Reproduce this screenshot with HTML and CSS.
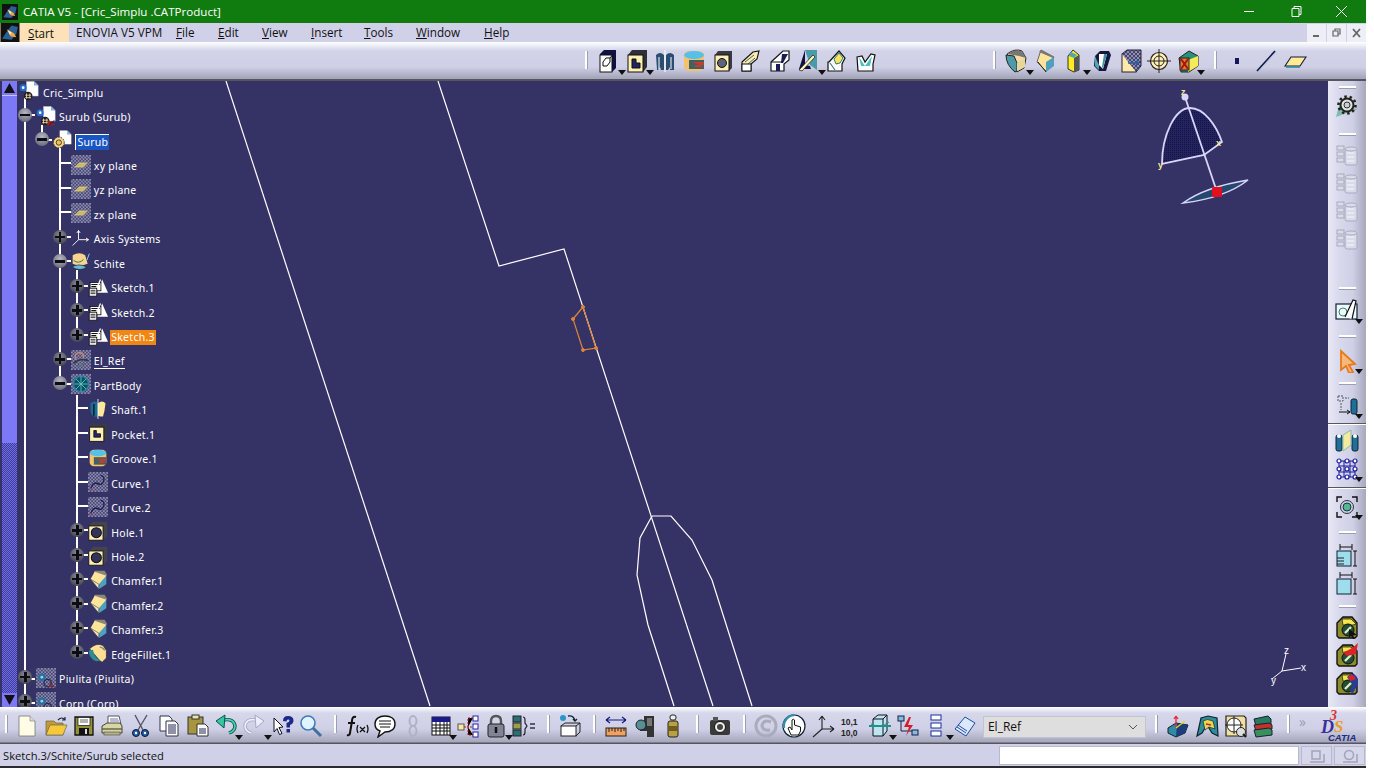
FILE: index.html
```html
<!DOCTYPE html>
<html lang="en">
<head>
<meta charset="utf-8">
<title>CATIA V5 - [Cric_Simplu .CATProduct]</title>
<link rel="stylesheet" href="styles.css">
</head>
<body>
<svg class="defs" aria-hidden="true">
<defs>
<pattern id="chk" width="4" height="4" patternUnits="userSpaceOnUse"><rect width="4" height="4" fill="#8d8db4"/><rect width="2" height="2" fill="#45456f"/><rect x="2" y="2" width="2" height="2" fill="#45456f"/></pattern>
<pattern id="dith" width="2" height="2" patternUnits="userSpaceOnUse"><rect width="2" height="2" fill="#26245c"/><rect width="1" height="1" fill="#12124a"/></pattern>
<symbol id="logo" viewBox="0 0 24 24"><rect width="24" height="24" fill="#111"/><path d="M2 20 9 9l5-6 8 2-2 9-6 7z" fill="#2b5f95"/><path d="M8 8l9 5 3 5-7-1z" fill="#f2a93c"/><path d="M9 9l5 3-2 3z" fill="#fff3c0"/></symbol>
<symbol id="product" viewBox="0 0 24 24"><path d="M9 .5h9l5 5V18H9z" fill="#fff" stroke="#bcd" stroke-width=".6"/><path d="M18 .5v5h5" fill="#7fb2e0"/><circle cx="5" cy="8" r="4.2" fill="#2470d0"/><circle cx="5" cy="8" r="1.6" fill="#fff"/><circle cx="11" cy="18" r="5.2" fill="#1a1a30"/><path d="M9 15v6M13 15v6M7.5 17h7M7.5 20h7" stroke="#f3d58a" stroke-width="1.1"/></symbol>
<symbol id="productr" viewBox="0 0 24 24"><use href="#product"/><path d="M15 17l8 6H13z" fill="#a32020"/><path d="M16 23l6-6" stroke="#300" stroke-width="1"/></symbol>
<symbol id="producth" viewBox="0 0 24 24"><rect width="24" height="24" fill="url(#chk)"/><circle cx="7" cy="11" r="4.500" fill="#2470a0"/><circle cx="7" cy="11" r="1.600" fill="#bcd"/><circle cx="14" cy="18" r="4.500" fill="none" stroke="#2a2a50" stroke-width="1.500"/><path d="M17 17l6 6h-8z" fill="#7a3040"/></symbol>
<symbol id="partdoc" viewBox="0 0 24 24"><path d="M8 .5h9l5 5V17H8z" fill="#fff"/><path d="M17 .5v5h5" fill="#7fb2e0"/><circle cx="7" cy="15" r="6.5" fill="#f6d78c" stroke="#3a3320" stroke-width="1.2" stroke-dasharray="2 1.2"/><circle cx="7" cy="15" r="3.2" fill="#e9c05a" stroke="#333"/></symbol>
<symbol id="plane" viewBox="0 0 24 24"><rect width="24" height="24" fill="url(#chk)"/><path d="M3 15l7-6h11l-6 6z" fill="#b9a868"/><path d="M5 14h10M7 12h10M9 10h9" stroke="#e3d58f" stroke-width=".8"/></symbol>
<symbol id="axis" viewBox="0 0 24 24"><path d="M9 14V3M9 3l-2 3M9 3l2 3M9 14h12M21 14l-3-2M21 14l-3 2M9 14l-7 7" fill="none" stroke="#fff" stroke-width="1.1"/></symbol>
<symbol id="sketches" viewBox="0 0 24 24"><path d="M2 4q8-5 15 0l3 10-10 3-8-3z" fill="#f6d48f"/><path d="M3 10q6 5 12-1" fill="none" stroke="#264" stroke-width="1"/><path d="M1 18q8-5 18 0q-8 6-18 0z" fill="#6fb7d8" stroke="#123" stroke-width=".8"/><path d="M19 10l3-8" stroke="#8cc6ff" stroke-width="1.2"/></symbol>
<symbol id="sketch" viewBox="0 0 24 24"><path d="M17 3 24 19H11z" fill="#fff"/><rect x="2.500" y="6.500" width="13" height="10" fill="#fff" stroke="#111"/><path d="M4 9h10M4 11.500h6" stroke="#111" stroke-width="1.400"/><path d="M15 3l-4 9" stroke="#fff" stroke-width="1.500"/><rect x="1.500" y="13.500" width="9" height="9.500" fill="#fff" stroke="#111"/><path d="M3 16h6M3 18h6M3 20h6" stroke="#111"/></symbol>
<symbol id="elref" viewBox="0 0 24 24"><rect width="24" height="24" fill="url(#chk)"/><circle cx="10" cy="8" r="5" fill="none" stroke="#cf8a72" stroke-width="1.5"/><path d="M3 16q8-7 18-3" fill="none" stroke="#2a3a50" stroke-width="2"/><path d="M6 20l10-3" stroke="#5a6a80" stroke-width="1.5"/></symbol>
<symbol id="body" viewBox="0 0 24 24"><rect width="24" height="24" fill="url(#chk)"/><circle cx="12" cy="12" r="9" fill="#124f66" stroke="#1a8d9f" stroke-width="1.4"/><path d="M4 12h16M12 3v18M6 6l12 12M18 6 6 18" stroke="#5ad0c4" stroke-width="1"/></symbol>
<symbol id="shaft" viewBox="0 0 24 24"><path d="M3 5q5-4 9 0v17l-4-1q-5-1-5-8z" fill="#1b6e95"/><path d="M12 5q5-4 9 0-1 10-3 16h-3l-3-1z" fill="#ffe79a"/><path d="M12 0v24" stroke="#fff" stroke-width="1"/><path d="M7 6v14" stroke="#123" stroke-width="2"/></symbol>
<symbol id="shaftt" viewBox="0 0 24 24"><path d="M3 6q4-4 8 0v15H8l-1-3-2 3H4z" fill="#2a4d72"/><path d="M13 6q4-4 8 0v15h-4v-3l-2 3h-2z" fill="#2a4d72"/><path d="M12 1v22M6 8v12M18 8v12" stroke="#fff" stroke-width="1"/></symbol>
<symbol id="pocket" viewBox="0 0 24 24"><path d="M2 5l4-4h17v17l-4 4z" fill="#3a3a45"/><rect x="2" y="5" width="17" height="17" fill="#ffefb5" stroke="#111"/><path d="M7 9v8h8v-4H10V9z" fill="#26266a" stroke="#111"/></symbol>
<symbol id="groove" viewBox="0 0 24 24"><rect x="2" y="2" width="20" height="20" rx="5" fill="#f4c26d"/><ellipse cx="12" cy="6" rx="10" ry="4" fill="#57c0e8"/><path d="M7 11h15v9H7z" fill="#41605f"/><path d="M10 13h12v3H13v2h9" fill="#c53c30"/></symbol>
<symbol id="curve" viewBox="0 0 24 24"><rect width="24" height="24" fill="url(#chk)"/><path d="M3 20q4-9 9-6t7-4q1-5-4-6" fill="none" stroke="#1c1c50" stroke-width="1.6"/><path d="M2 19l3 3" stroke="#a04060" stroke-width="1.5"/></symbol>
<symbol id="hole" viewBox="0 0 24 24"><path d="M1 6l5-5h17v17l-5 5z" fill="#44444e"/><rect x="1" y="6" width="17" height="17" fill="#ffefb5" stroke="#111"/><circle cx="10" cy="14" r="6" fill="#33335a" stroke="#111" stroke-width="1.3"/></symbol>
<symbol id="chamfer" viewBox="0 0 24 24"><path d="M8 1h12l3 5-7 6-9-6z" fill="#8b8678"/><path d="M8 2 22 7l-8 13-11-9z" fill="#ffe59a"/><path d="M22 7v10l-9 6v-6z" fill="#4f9fbe"/><path d="M3 11l10 12v-6z" fill="#efe6c8" stroke="#222" stroke-width=".6"/></symbol>
<symbol id="fillet" viewBox="0 0 24 24"><path d="M2 7q8-8 16-4l4 6v9l-5 5-3-2z" fill="#ffdf96" stroke="#223" stroke-width=".7"/><path d="M1 9q0 10 9 13l5-1q-8-4-9-13z" fill="#2f8d92"/><path d="M14 5q4 0 6 4" stroke="#8a8478" stroke-width="1.5" fill="none"/></symbol>
<symbol id="pad" viewBox="0 0 24 24"><path d="M8 1h12v18l-4 4H4V5z" fill="#111142"/><rect x="4" y="6" width="12" height="17" fill="#fff" stroke="#111"/><path d="M7 13l3-4h4v4l-3 4H7zM14 9l4-5" fill="#fff" stroke="#111"/></symbol>
<symbol id="pocket2" viewBox="0 0 24 24"><path d="M3 6l4-5h15v17l-4 5H3z" fill="#2f2f3a"/><rect x="3" y="6" width="15" height="17" fill="#ffefb5" stroke="#111"/><path d="M7 10v9h8v-5h-4v-4z" fill="#23235e" stroke="#111"/></symbol>
<symbol id="hole2" viewBox="0 0 24 24"><path d="M4 6l3-4h14v17l-3 3H4z" fill="#3a3a44"/><rect x="4" y="6" width="14" height="16" fill="#ffefb5" stroke="#111"/><circle cx="11" cy="14" r="4.5" fill="#5d6478" stroke="#111"/></symbol>
<symbol id="rib" viewBox="0 0 24 24"><path d="M3 13 14 3l6-1-2 8-6 5v7H3z" fill="#ffe9b0" stroke="#111" stroke-width="1.1"/><path d="M6 13l9-7M9 15l7-6" stroke="#3a6a6a"/><rect x="3" y="15" width="9" height="7" fill="#fff" stroke="#111"/></symbol>
<symbol id="slot" viewBox="0 0 24 24"><path d="M3 13 15 2h6v9l-5 4v7H3z" fill="#fff" stroke="#111" stroke-width="1.2"/><path d="M14 5h6l-5 9h-2z" fill="#1c1c5a"/><rect x="8" y="15" width="4" height="7" fill="#1c1c5a"/><path d="M3 13h12" stroke="#111"/></symbol>
<symbol id="stiff" viewBox="0 0 24 24"><path d="M9 1h12v20l-7-5z" fill="#4b9aa8"/><path d="M9 1v15l5 1 1 3-12 0z" fill="#11113f"/><path d="M3 21 17 6l2 2L6 22z" fill="#fff5c0" stroke="#111" stroke-width=".7"/></symbol>
<symbol id="combine" viewBox="0 0 24 24"><path d="M4 13 14 2l6 7-3 6v7H3v-9z" fill="#fff" stroke="#111" stroke-width="1.2"/><path d="M9 10l5-6 4 5-3 5-4 1z" fill="#ffe35f" stroke="#2a7a7a"/><path d="M5 14l5 7" stroke="#3a7a8a" stroke-width="1.2"/></symbol>
<symbol id="loft" viewBox="0 0 24 24"><path d="M3 8l5-1 3 6 6-8 4 1-2 9v7H4z" fill="#fff" stroke="#111" stroke-width="1.2"/><path d="M5 8l6 9 7-10-2 10H7z" fill="#4fc0c0"/></symbol>
<symbol id="dfillet" viewBox="0 0 24 24"><path d="M3 5q8-6 15-3l4 7-2 10-7 4z" fill="#f5dca6" stroke="#222"/><path d="M2 6q0 10 9 17l2-1v-8l-3-7z" fill="#4e9aa8" stroke="#222"/><path d="M13 14l8-5v9l-8 4z" fill="#e8d59a"/><path d="M3 5l6-3 9 0 4 7-7-2z" fill="#777"/></symbol>
<symbol id="dchamfer" viewBox="0 0 24 24"><path d="M8 1l13 7-8 14-9-9z" fill="#ffe39a" stroke="#666"/><path d="M21 8v9l-8 6V13z" fill="#4f9fbe"/><path d="M5 13l8 10" stroke="#222"/><path d="M8 1l13 7-1 1-14-6z" fill="#777"/></symbol>
<symbol id="draft" viewBox="0 0 24 24"><path d="M7 7l5-6 6 5v15l-5 2-6-3z" fill="#ffec1f" stroke="#333"/><path d="M18 6v15l-5 2V9z" fill="#555"/><path d="M10 3l6 3-3 3-5-2z" fill="#4ea5b4"/></symbol>
<symbol id="shell" viewBox="0 0 24 24"><path d="M5 7l5-5h9l2 4-5 16H9l-5-5z" fill="#16163e"/><path d="M9 5h8l-4 15-4-4z" fill="#fff"/><path d="M5 7l4 9 0 5-4-4z" fill="#4ea5b4"/><path d="M14 5l3 0-4 14-1-1z" fill="#3d91a5"/></symbol>
<symbol id="thick" viewBox="0 0 24 24"><rect x="3" y="5" width="14" height="18" fill="#ffe9a8" stroke="#223"/><path d="M3 5l5-4h14v16l-5 6" fill="url(#chk)" stroke="#223"/><path d="M9 14h11M20 14l-3-2M20 14l-3 2" stroke="#2a5d9a" stroke-width="1.4"/></symbol>
<symbol id="thread" viewBox="0 0 24 24"><circle cx="12" cy="12" r="8.5" fill="#ffefb5" stroke="#222" stroke-width="1.2"/><circle cx="12" cy="12" r="5" fill="none" stroke="#222"/><path d="M12 0v24M0 12h24" stroke="#222"/></symbol>
<symbol id="remove" viewBox="0 0 24 24"><path d="M3 9l10-7 9 5v10l-9 6H5z" fill="#2b8f7b" stroke="#222"/><path d="M12 11l10-4v10l-10 6z" fill="#f6ea55"/><rect x="4" y="9" width="9" height="12" fill="#d9822e" stroke="#222"/><path d="M5 10l7 10M12 10l-7 10" stroke="#a11" stroke-width="2"/></symbol>
<symbol id="point" viewBox="0 0 24 24"><rect x="10" y="9" width="4" height="6" fill="#16165a"/></symbol>
<symbol id="line" viewBox="0 0 24 24"><path d="M3 22 21 2" stroke="#16163f" stroke-width="1.6"/><path d="M4 23 22 3" stroke="#9fc2f0" stroke-width=".8"/></symbol>
<symbol id="planeq" viewBox="0 0 24 24"><path d="M2 17 8 8h15l-6 9z" fill="#ffeb96" stroke="#141445" stroke-width="1.1"/><path d="M3 18h14" stroke="#2e8aa0" stroke-width="1.6"/></symbol>
<symbol id="new" viewBox="0 0 24 24"><path d="M4 2h11l5 5v15H4z" fill="#fffde6" stroke="#777" stroke-width=".8"/><path d="M15 2v5h5" fill="#ddd" stroke="#777" stroke-width=".6"/></symbol>
<symbol id="open" viewBox="0 0 24 24"><path d="M2 7h8l2 2h7v12H2z" fill="#c49a30" stroke="#665" stroke-width=".7"/><path d="M2 21l4-10h17l-4 10z" fill="#f7c93a" stroke="#665" stroke-width=".7"/><path d="M14 6q4-4 7 0M21 3v3h-3" fill="none" stroke="#224" stroke-width="1.2"/></symbol>
<symbol id="save" viewBox="0 0 24 24"><path d="M3 3h18v18H3z" fill="#8f9238" stroke="#111" stroke-width="1.3"/><rect x="6" y="3.5" width="12" height="8" fill="#fff" stroke="#111" stroke-width=".7"/><path d="M8 6h8M8 8h8" stroke="#666"/><rect x="7" y="14" width="10" height="7" fill="#111"/><rect x="13" y="15" width="2" height="5" fill="#ddd"/></symbol>
<symbol id="print" viewBox="0 0 24 24"><path d="M8 2h11l2 8H8z" fill="#fff" stroke="#556"/><path d="M10 5h8M10 7h9" stroke="#77a"/><path d="M2 12l5-3h13l2 3v7H2z" fill="#d9d5a6" stroke="#443"/><path d="M2 15h20" stroke="#564" stroke-width="1.4"/><rect x="4" y="18" width="16" height="3" fill="#b8b28a" stroke="#443" stroke-width=".6"/></symbol>
<symbol id="cut" viewBox="0 0 24 24"><path d="M6 1l8 15M18 1 9 16" stroke="#556" stroke-width="1.4"/><circle cx="7" cy="19" r="3.5" fill="#1e5fa5" stroke="#113"/><circle cx="16" cy="19" r="3.5" fill="#1e5fa5" stroke="#113"/><circle cx="7" cy="19" r="1.2" fill="#fff"/><circle cx="16" cy="19" r="1.2" fill="#fff"/></symbol>
<symbol id="copy" viewBox="0 0 24 24"><path d="M3 2h9l3 3v12H3z" fill="#fff" stroke="#334"/><path d="M9 7h9l3 3v12H9z" fill="#fff" stroke="#334"/><path d="M11 11h8M11 13h8M11 15h8M11 17h8M11 19h8" stroke="#225"/></symbol>
<symbol id="paste" viewBox="0 0 24 24"><rect x="2" y="3" width="15" height="17" fill="#a79540" stroke="#333"/><rect x="6" y="1" width="7" height="4" fill="#e9e3b0" stroke="#333"/><path d="M11 10h8l3 3v9H11z" fill="#fff" stroke="#333"/><path d="M13 15h7M13 17h7M13 19h7" stroke="#225"/></symbol>
<symbol id="undo" viewBox="0 0 24 24"><path d="M9 6q11-2 12 6 0 5-6 7" fill="none" stroke="#0d4f4f" stroke-width="3.4"/><path d="M9 6q11-2 12 6 0 5-6 7" fill="none" stroke="#46d8b0" stroke-width="1.6"/><path d="M11 1 2 7l8 7z" fill="#36c79f" stroke="#0d4f4f"/></symbol>
<symbol id="redo" viewBox="0 0 24 24"><path d="M15 6Q4 4 3 12q0 5 6 7" fill="none" stroke="#a6a8c0" stroke-width="3.4"/><path d="M15 6Q4 4 3 12q0 5 6 7" fill="none" stroke="#eef" stroke-width="1.6"/><path d="M13 1l9 6-8 7z" fill="#eef" stroke="#a6a8c0"/></symbol>
<symbol id="help" viewBox="0 0 24 24"><path d="M3 4l9 9-4 .5 3 6-2.500 1-2.500-6L3 18z" fill="#fff" stroke="#112" stroke-width="1"/><path d="M12 7q0-5 5-5 5.500 0 5.500 4.500 0 3-3.500 4.500v2.500h-3.500V9q3-1 3-2.500 0-1-1.300-1-1.700 0-1.700 2z" fill="#1c2a8c"/><rect x="15.500" y="15" width="3.500" height="3.500" fill="#1c2a8c"/></symbol>
<symbol id="search" viewBox="0 0 24 24"><circle cx="9" cy="9" r="7" fill="#dff4ff" stroke="#3e7db8" stroke-width="1.6"/><path d="M14 14l8 8" stroke="#3e6f9e" stroke-width="3"/></symbol>
<symbol id="fx" viewBox="0 0 24 24"><path d="M11 3Q7 2 7 7l-2 12q-.5 3-3 2M3 9h7" fill="none" stroke="#111" stroke-width="2"/><path d="M13 11q-2 4 0 8M22 11q2 4 0 8M15 13l5 5M20 13l-5 5" fill="none" stroke="#111" stroke-width="1.3"/></symbol>
<symbol id="chat" viewBox="0 0 24 24"><path d="M12 2c6 0 10 3 10 8s-4 8-10 8l-7 5 2-6c-3-1-5-4-5-7 0-5 4-8 10-8z" fill="#fff" stroke="#111" stroke-width="1.4"/><path d="M6 7h12M6 10h12M7 13h10" stroke="#111"/></symbol>
<symbol id="link" viewBox="0 0 24 24"><ellipse cx="12" cy="7" rx="3.500" ry="5" fill="none" stroke="#b0b1c5" stroke-width="2"/><ellipse cx="12" cy="17" rx="3.500" ry="5" fill="none" stroke="#b0b1c5" stroke-width="2"/></symbol>
<symbol id="table" viewBox="0 0 24 24"><rect x="3" y="3" width="18" height="18" fill="#fff" stroke="#111"/><rect x="3" y="3" width="18" height="5" fill="#1a1a8c"/><path d="M3 11h18M3 14h18M3 17h18M7 8v13M11 8v13M15 8v13M18 8v13" stroke="#111"/></symbol>
<symbol id="treeic" viewBox="0 0 24 24"><rect x="2" y="10" width="6" height="6" fill="#f7e8a8" stroke="#555"/><rect x="17" y="2" width="5" height="5" fill="#fff" stroke="#22a"/><rect x="17" y="10" width="5" height="5" fill="#fff" stroke="#22a"/><rect x="17" y="18" width="5" height="5" fill="#fff" stroke="#22a"/><path d="M8 13h9M12 13V4h5M12 13v8h5" stroke="#a22" stroke-dasharray="2 1"/></symbol>
<symbol id="lock" viewBox="0 0 24 24"><path d="M7 11V7q0-5 5-5t5 5v4" fill="none" stroke="#555" stroke-width="2.400"/><rect x="4" y="10" width="16" height="13" rx="2" fill="#828496" stroke="#222"/><path d="M12 13v6" stroke="#111" stroke-width="2.500"/></symbol>
<symbol id="params" viewBox="0 0 24 24"><rect x="1" y="2" width="8" height="6" fill="#2a6f72" stroke="#223"/><rect x="1" y="9" width="8" height="6" fill="#98a048" stroke="#223"/><rect x="1" y="16" width="8" height="6" fill="#2a6f72" stroke="#223"/><path d="M11 3q2 0 2 3v3l2 3-2 3v3q0 3-2 3" fill="none" stroke="#223" stroke-width="1.200"/><path d="M18 10h5M18 14h5" stroke="#334" stroke-width="1.300"/></symbol>
<symbol id="update" viewBox="0 0 24 24"><rect x="3" y="12" width="15" height="10" fill="#fff" stroke="#222"/><path d="M3 12l4-3h15l-4 3M18 22l4-4V9" fill="none" stroke="#222"/><circle cx="5" cy="4" r="3" fill="#2a96c8"/><path d="M10 2q6-1 7 5M15 5l2 2 2-2" fill="none" stroke="#123" stroke-width="1.400"/></symbol>
<symbol id="measure" viewBox="0 0 24 24"><path d="M2 6h20M2 6l4-3M2 6l4 3M22 6l-4-3M22 6l-4 3" stroke="#111a80" stroke-width="1.200" fill="none"/><rect x="2" y="14" width="20" height="8" fill="#f0a060" stroke="#222"/><path d="M5 14v4M8 14v3M11 14v4M14 14v3M17 14v4M20 14v3" stroke="#222"/></symbol>
<symbol id="inertia" viewBox="0 0 24 24"><path d="M11 2h10v21h-7v-6H7v-4h4z" fill="#333"/><path d="M14 4h5v8h-5z" fill="#777"/><circle cx="8" cy="11" r="5" fill="#5b8f8f" stroke="#123"/></symbol>
<symbol id="mass" viewBox="0 0 24 24"><rect x="9" y="1" width="6" height="5" rx="2" fill="#eee" stroke="#222"/><rect x="7" y="7" width="10" height="16" rx="2" fill="#b9a040" stroke="#222"/><path d="M7 12h10v5H7z" fill="#705c20"/></symbol>
<symbol id="camera" viewBox="0 0 24 24"><rect x="2" y="6" width="20" height="15" rx="2" fill="#3a3a3a"/><rect x="5" y="3" width="5" height="4" fill="#555"/><circle cx="12" cy="13" r="5.500" fill="#eee" stroke="#111"/><circle cx="12" cy="13" r="3" fill="#444"/></symbol>
<symbol id="spin" viewBox="0 0 24 24"><circle cx="12" cy="12" r="10" fill="none" stroke="#aaacbd" stroke-width="3"/><path d="M17 8Q10 5 8 11q0 6 8 5" fill="none" stroke="#aaacbd" stroke-width="3"/></symbol>
<symbol id="hand" viewBox="0 0 24 24"><circle cx="12" cy="12" r="11" fill="#fff" stroke="#123" stroke-width="1.200"/><path d="M2 14A11 11 0 0 1 12 1" fill="none" stroke="#2f8fa8" stroke-width="2.500"/><path d="M9 21l-3-7 2-1 2 3V6q1.500-1.500 2.500 0v5l6 2v4l-2 4z" fill="#fff" stroke="#111"/></symbol>
<symbol id="axes" viewBox="0 0 24 24"><path d="M11 15V2M11 2 8 6M11 2l3 4M11 15h12M23 15l-4-3M23 15l-4 3M11 15l-9 8" fill="none" stroke="#222" stroke-width="1.100"/></symbol>
<symbol id="num" viewBox="0 0 24 24"><text x="2" y="11" class="num">10,1</text><text x="2" y="22" class="num">10,0</text></symbol>
<symbol id="box" viewBox="0 0 24 24"><path d="M5 5l5-4h9v16l-4 5H5z" fill="#bfe6ee" stroke="#112"/><path d="M5 5h10v17M15 5l4-4" fill="none" stroke="#112"/><path d="M1 12h22" stroke="#1f9090" stroke-width="2"/><path d="M3 10q9 5 18-2" fill="none" stroke="#1f9090"/></symbol>
<symbol id="tol" viewBox="0 0 24 24"><rect x="2" y="2" width="6" height="5" fill="#8bd" stroke="#124"/><rect x="16" y="16" width="6" height="5" fill="#8bd" stroke="#124"/><path d="M5 7v10h11" fill="none" stroke="#124"/><path d="M13 3 8 13h5l-3 9 7-11h-5l3-8z" fill="#d51d2a"/></symbol>
<symbol id="stack" viewBox="0 0 24 24"><rect x="7" y="1" width="10" height="5" fill="#fff" stroke="#1a2ea0"/><rect x="7" y="9" width="10" height="5" fill="#fff" stroke="#1a2ea0"/><rect x="7" y="17" width="10" height="5" fill="#fff" stroke="#1a2ea0"/></symbol>
<symbol id="layers" viewBox="0 0 24 24"><path d="M2 15 12 3l10 6-9 13z" fill="#dbe8ff" stroke="#1a4ea0"/><path d="M5 11l9 6M4 13l9 6" stroke="#1a4ea0"/></symbol>
<symbol id="boxaxis" viewBox="0 0 24 24"><path d="M2 14l8-5 12 2-3 8-9 4-8-4z" fill="#2e8aa5" stroke="#123"/><path d="M11 9l11 2-3 8-9 4z" fill="#1f3d7a"/><path d="M10 14V2M10 2 8 5M10 2l2 3" stroke="#e23" stroke-width="1.300"/><path d="M10 14l9-7" stroke="#dd2" stroke-width="1.300"/></symbol>
<symbol id="gsd" viewBox="0 0 24 24"><path d="M2 22 6 4l7-2 9 2 1 18-6-3-5-8-5 8z" fill="#2f8d9a" stroke="#123" stroke-width="1.200"/><path d="M8 7q4-3 10 0l2 8-6-2-4 3z" fill="#e8d850" stroke="#123" stroke-width=".7"/><path d="M11 10l5 1" stroke="#c22" stroke-width="1.500"/></symbol>
<symbol id="photo" viewBox="0 0 24 24"><path d="M3 2h18l2 2v18H3z" fill="#f2dfa2" stroke="#222" stroke-width="1.200"/><circle cx="11" cy="11" r="7" fill="#fff" stroke="#222"/><path d="M11 2v18M2 11h18" stroke="#222"/><circle cx="18" cy="18" r="4.500" fill="#ddd" stroke="#222"/><path d="M20 20l3 3" stroke="#222" stroke-width="2"/></symbol>
<symbol id="books" viewBox="0 0 24 24"><path d="M3 5l14-3 3 3v5L5 12z" fill="#2a7a5f" stroke="#123"/><path d="M3 11l15-2 3 2v4L5 17z" fill="#c7302c" stroke="#123"/><path d="M3 16l15-2 3 2v5L5 23z" fill="#3a8f5f" stroke="#123"/></symbol>
<symbol id="gear" viewBox="0 0 24 24"><path d="M1 23 23 15 4 12z" fill="#7fbcae"/><circle cx="12" cy="11" r="6.500" fill="#dfe3d8" stroke="#222" stroke-width="2"/><circle cx="12" cy="11" r="8.500" fill="none" stroke="#222" stroke-width="2.600" stroke-dasharray="2.500 2.800"/><circle cx="12" cy="11" r="3" fill="#c8ccdd" stroke="#333"/></symbol>
<symbol id="ghost" viewBox="0 0 24 24"><g fill="#d9dbe9" stroke="#a9aabf"><rect x="10" y="5" width="12" height="16" rx="2"/><ellipse cx="16" cy="5" rx="6" ry="2"/><rect x="2" y="2" width="7" height="4"/><rect x="2" y="8" width="7" height="4"/><rect x="2" y="14" width="7" height="4"/></g><path d="M12 9h7M12 13h7M12 17h7" stroke="#f7f7ff"/></symbol>
<symbol id="sketchtool" viewBox="0 0 24 24"><rect x="1" y="5" width="21" height="15" fill="#eef8ff" stroke="#123" stroke-width="1.200"/><circle cx="8" cy="13" r="4" fill="none" stroke="#3a8a6a"/><path d="M10 18 18 1l3 1-4 18" fill="#fff" stroke="#111" stroke-width="1.200"/></symbol>
<symbol id="cursor" viewBox="0 0 24 24"><path d="M6 2l14 13-6 1 4 7-4 1-3-7-5 4z" fill="#f5b87d" stroke="#e87a1a" stroke-width="1.800"/></symbol>
<symbol id="assy" viewBox="0 0 24 24"><path d="M3 2h5v5H3zM10 4h4M6 9v7" fill="none" stroke="#556" stroke-dasharray="2 1"/><rect x="16" y="5" width="6" height="15" rx="2" fill="#1f6f9a" stroke="#123"/><path d="M4 18h11M15 18l-3-2M15 18l-3 2" stroke="#111"/></symbol>
<symbol id="mirror" viewBox="0 0 24 24"><rect x="1" y="6" width="6" height="16" rx="2" fill="#1f6f9a" stroke="#123"/><rect x="17" y="6" width="6" height="16" rx="2" fill="#1f6f9a" stroke="#123"/><path d="M8 6l8-5v15l-8 6z" fill="#f1ea9f" stroke="#8ba"/><circle cx="4" cy="7" r="2" fill="#fff"/><circle cx="20" cy="7" r="2" fill="#fff"/></symbol>
<symbol id="pattern" viewBox="0 0 24 24"><path d="M4 4h16v16H4zM9 4v16M15 4v16M4 9h16M4 15h16" fill="none" stroke="#1c1c9a"/><g fill="#fff" stroke="#1c1c9a" stroke-width="1.200"><circle cx="4" cy="4" r="2"/><circle cx="12" cy="4" r="2"/><circle cx="20" cy="4" r="2"/><circle cx="4" cy="12" r="2"/><circle cx="12" cy="12" r="2"/><circle cx="20" cy="12" r="2"/><circle cx="4" cy="20" r="2"/><circle cx="12" cy="20" r="2"/><circle cx="20" cy="20" r="2"/></g></symbol>
<symbol id="target" viewBox="0 0 24 24"><path d="M2 7V2h5M22 7V2h-5M2 17v5h5M22 17v5h-5" fill="none" stroke="#111" stroke-width="1.400"/><circle cx="12" cy="12" r="6.500" fill="#c8d0e8" stroke="#333"/><circle cx="12" cy="12" r="4" fill="#52b890" stroke="#234"/></symbol>
<symbol id="dim1" viewBox="0 0 24 24"><path d="M5 1v6M17 1v6M5 4h12" stroke="#111"/><rect x="2" y="8" width="14" height="15" fill="#9fdcec" stroke="#123"/><path d="M2 15h7M2 18h7M2 21h7" stroke="#222"/><path d="M20 8v15M18 8h4M18 23h4" stroke="#111"/></symbol>
<symbol id="dim2" viewBox="0 0 24 24"><path d="M5 1v6M17 1v6M5 4h12" stroke="#111"/><rect x="2" y="8" width="14" height="15" fill="#9fdcec" stroke="#123"/><path d="M20 8v15M18 8h4M18 23h4" stroke="#111"/></symbol>
<symbol id="snap" viewBox="0 0 24 24"><path d="M2 8l6-6h9l5 6v13l-2 2H4l-2-2z" fill="#8c8c2c" stroke="#111" stroke-width="1.400"/><path d="M7 4h9l5 5-3 1H8z" fill="#f6e64e" stroke="#111" stroke-width=".7"/><circle cx="13" cy="15" r="6" fill="#1f4f30" stroke="#111"/><path d="M10 18l6-6" stroke="#dfe8d0" stroke-width="2.400"/></symbol>
<symbol id="snap1" viewBox="0 0 24 24"><use href="#snap"/><path d="M14 14l8 6-4 .5 2 3-2 .5-2-3-2 2z" fill="#111"/></symbol>
<symbol id="snap2" viewBox="0 0 24 24"><use href="#snap"/><path d="M8 9q8-2 15-9l-2 11-9 2z" fill="#d8232a"/></symbol>
<symbol id="snap3" viewBox="0 0 24 24"><use href="#snap"/><path d="M12 6q6-6 10 0l1 7-5 9-3-1 3-8-3-3z" fill="#2b3a9f"/><path d="M13 5q5-3 8 3l-6 2z" fill="#d8232a"/></symbol>
</defs>
</svg>

<div class="app">
  <header class="titlebar">
    <svg class="title-logo"><use href="#logo"/></svg>
    <span class="title-text">CATIA V5 - [Cric_Simplu .CATProduct]</span>
    <div class="win-controls">
      <svg class="win-btn" viewBox="0 0 46 23"><path d="M18 11.500h10" stroke="#fff"/></svg>
      <svg class="win-btn" viewBox="0 0 46 23"><path d="M20 8.500h7v8h-7zM22 8.500v-2h7v8h-2" fill="none" stroke="#fff"/></svg>
      <svg class="win-btn" viewBox="0 0 46 23"><path d="M18 6l11 11M29 6 18 17" stroke="#fff"/></svg>
    </div>
  </header>

  <nav class="menubar">
    <div class="menu-start"><svg class="menu-logo"><use href="#logo"/></svg><span><u>S</u>tart</span></div>
    <span class="menu enovia">ENOVIA V5 VPM</span>
    <span class="menu file"><u>F</u>ile</span>
    <span class="menu edit"><u>E</u>dit</span>
    <span class="menu view"><u>V</u>iew</span>
    <span class="menu insert"><u>I</u>nsert</span>
    <span class="menu tools"><u>T</u>ools</span>
    <span class="menu window"><u>W</u>indow</span>
    <span class="menu help"><u>H</u>elp</span>
    <div class="doc-controls">
      <svg class="doc-btn" viewBox="0 0 19 18"><path d="M6 12h6" stroke="#666" stroke-width="2"/></svg>
      <svg class="doc-btn" viewBox="0 0 19 18"><path d="M6 7h5v5H6zM8 7V5h5v5h-2" fill="none" stroke="#666" stroke-width="1.200"/></svg>
      <svg class="doc-btn" viewBox="0 0 19 18"><path d="M6 5l7 8M13 5l-7 8" stroke="#666" stroke-width="1.800"/></svg>
    </div>
  </nav>

  <div class="toolbar top">
    <i class="sep"></i>
    <span class="t drop"><svg class="i"><use href="#pad"/></svg></span>
    <span class="t drop"><svg class="i"><use href="#pocket2"/></svg></span>
    <span class="t"><svg class="i"><use href="#shaftt"/></svg></span>
    <span class="t"><svg class="i"><use href="#groove"/></svg></span>
    <span class="t"><svg class="i"><use href="#hole2"/></svg></span>
    <span class="t"><svg class="i"><use href="#rib"/></svg></span>
    <span class="t"><svg class="i"><use href="#slot"/></svg></span>
    <span class="t drop"><svg class="i"><use href="#stiff"/></svg></span>
    <span class="t"><svg class="i"><use href="#combine"/></svg></span>
    <span class="t"><svg class="i"><use href="#loft"/></svg></span>
    <i class="sep wide"></i>
    <span class="t drop"><svg class="i"><use href="#dfillet"/></svg></span>
    <span class="t"><svg class="i"><use href="#dchamfer"/></svg></span>
    <span class="t drop"><svg class="i"><use href="#draft"/></svg></span>
    <span class="t"><svg class="i"><use href="#shell"/></svg></span>
    <span class="t"><svg class="i"><use href="#thick"/></svg></span>
    <span class="t"><svg class="i"><use href="#thread"/></svg></span>
    <span class="t drop"><svg class="i"><use href="#remove"/></svg></span>
    <i class="sep near"></i>
    <span class="t"><svg class="i"><use href="#point"/></svg></span>
    <span class="t"><svg class="i"><use href="#line"/></svg></span>
    <span class="t"><svg class="i"><use href="#planeq"/></svg></span>
  </div>

  <main class="workspace">
    <div class="viewport">
      <svg class="canvas" viewBox="0 81 1328 626" aria-hidden="true">
        <g fill="none" stroke="#fff" stroke-width="1.200">
          <path d="M226 81 430 706"/>
          <path d="M438 81 499 266 564 249 713 706"/>
          <path d="M652 516H671L692 540 712 580 752 706"/>
          <path d="M652 516 640 538 637 575 648 625 674 706"/>
        </g>
        <g fill="#e0833a" stroke="#e0833a">
          <path d="M583 307 573 319 583 350 596 348z" fill="none" stroke-width="1.200"/>
          <circle cx="583" cy="307" r="1.500"/><circle cx="573" cy="319" r="1.500"/><circle cx="583" cy="350" r="1.500"/><circle cx="596" cy="348" r="1.500"/>
        </g>
        <g fill="none" stroke="#fff" stroke-width="2">
          <path d="M25 95V707M25 115H35M25 679H35M25 703H35"/>
          <path d="M42 125V140H52"/>
          <path d="M60 147V384M60 163H71M60 188H71M60 212H71M60 237H71M60 261H71M60 359H71M60 384H71"/>
          <path d="M77 270V335M77 286H88M77 310H88M77 335H88"/>
          <path d="M77 395V653M77 408H88M77 433H88M77 457H88M77 482H88M77 506H88M77 530H88M77 555H88M77 579H88M77 604H88M77 628H88M77 653H88"/>
        </g>
        <g class="compass">
          <path d="M1162 164C1162 135 1175 108 1190 108 1204 108 1216 125 1222 142L1204 155z" fill="url(#dith)" stroke="#d9d6fb" stroke-width="1.800"/>
          <path d="M1185 97 1217 192" stroke="#d9d6fb" stroke-width="1.800" fill="none"/>
          <path d="M1183 203Q1205 187 1248 180 1225 198 1183 203z" fill="#26486f" stroke="#d9d6fb" stroke-width="1.500"/>
          <circle cx="1185" cy="97" r="3.500" fill="#d9d6fb"/>
          <rect x="1212" y="187" width="10" height="10" rx="1.500" fill="#e0101c"/>
          <text x="1181" y="95" class="cz">z</text>
          <text x="1158" y="168" class="cz">y</text>
          <text x="1216" y="146" class="cz">x</text>
        </g>
        <g class="triad" fill="none" stroke="#fff" stroke-width="1">
          <path d="M1282 671 1286 654M1282 671 1301 668M1282 671 1272 679"/>
          <text x="1284" y="654" class="ax">z</text>
          <text x="1301" y="671" class="ax">x</text>
          <text x="1271" y="684" class="ax">y</text>
        </g>
      </svg>

      <div class="scrollbar">
        <svg class="arrow" viewBox="0 0 15 14"><path d="M7.500 2 13 12H2z" fill="#111"/></svg>
        <div class="thumb"></div>
        <div class="track"></div>
        <svg class="arrow" viewBox="0 0 15 14"><path d="M7.500 12 13 2H2z" fill="#111"/></svg>
      </div>

      <ul class="tree">
        <li class="row lv0"><span class="x"></span><svg class="ti"><use href="#product"/></svg><span class="lb">Cric_Simplu</span></li>
        <li class="row lv1"><span class="x minus"></span><svg class="ti"><use href="#productr"/></svg><span class="lb">Surub (Surub)</span></li>
        <li class="row lv2"><span class="x minus"></span><svg class="ti"><use href="#partdoc"/></svg><span class="lb sel">Surub</span></li>
        <li class="row lv3"><span class="x"></span><svg class="ti"><use href="#plane"/></svg><span class="lb">xy plane</span></li>
        <li class="row lv3"><span class="x"></span><svg class="ti"><use href="#plane"/></svg><span class="lb">yz plane</span></li>
        <li class="row lv3"><span class="x"></span><svg class="ti"><use href="#plane"/></svg><span class="lb">zx plane</span></li>
        <li class="row lv3"><span class="x plus"></span><svg class="ti"><use href="#axis"/></svg><span class="lb">Axis Systems</span></li>
        <li class="row lv3"><span class="x minus"></span><svg class="ti"><use href="#sketches"/></svg><span class="lb">Schite</span></li>
        <li class="row lv4"><span class="x plus"></span><svg class="ti"><use href="#sketch"/></svg><span class="lb">Sketch.1</span></li>
        <li class="row lv4"><span class="x plus"></span><svg class="ti"><use href="#sketch"/></svg><span class="lb">Sketch.2</span></li>
        <li class="row lv4"><span class="x plus"></span><svg class="ti"><use href="#sketch"/></svg><span class="lb hot">Sketch.3</span></li>
        <li class="row lv3"><span class="x plus"></span><svg class="ti"><use href="#elref"/></svg><span class="lb und">El_Ref</span></li>
        <li class="row lv3"><span class="x minus"></span><svg class="ti"><use href="#body"/></svg><span class="lb">PartBody</span></li>
        <li class="row lv4"><span class="x"></span><svg class="ti"><use href="#shaft"/></svg><span class="lb">Shaft.1</span></li>
        <li class="row lv4"><span class="x"></span><svg class="ti"><use href="#pocket"/></svg><span class="lb">Pocket.1</span></li>
        <li class="row lv4"><span class="x"></span><svg class="ti"><use href="#groove"/></svg><span class="lb">Groove.1</span></li>
        <li class="row lv4"><span class="x"></span><svg class="ti"><use href="#curve"/></svg><span class="lb">Curve.1</span></li>
        <li class="row lv4"><span class="x"></span><svg class="ti"><use href="#curve"/></svg><span class="lb">Curve.2</span></li>
        <li class="row lv4"><span class="x plus"></span><svg class="ti"><use href="#hole"/></svg><span class="lb">Hole.1</span></li>
        <li class="row lv4"><span class="x plus"></span><svg class="ti"><use href="#hole"/></svg><span class="lb">Hole.2</span></li>
        <li class="row lv4"><span class="x plus"></span><svg class="ti"><use href="#chamfer"/></svg><span class="lb">Chamfer.1</span></li>
        <li class="row lv4"><span class="x plus"></span><svg class="ti"><use href="#chamfer"/></svg><span class="lb">Chamfer.2</span></li>
        <li class="row lv4"><span class="x plus"></span><svg class="ti"><use href="#chamfer"/></svg><span class="lb">Chamfer.3</span></li>
        <li class="row lv4"><span class="x plus"></span><svg class="ti"><use href="#fillet"/></svg><span class="lb">EdgeFillet.1</span></li>
        <li class="row lv1"><span class="x plus"></span><svg class="ti"><use href="#producth"/></svg><span class="lb">Piulita (Piulita)</span></li>
        <li class="row lv1"><span class="x plus"></span><svg class="ti"><use href="#producth"/></svg><span class="lb">Corp (Corp)</span></li>
      </ul>
    </div>

    <aside class="sidebar">
      <i class="hsep s-a"></i>
      <span class="st"><svg class="i"><use href="#gear"/></svg></span>
      <i class="hsep s-b"></i>
      <span class="st"><svg class="i"><use href="#ghost"/></svg></span>
      <span class="st"><svg class="i"><use href="#ghost"/></svg></span>
      <span class="st"><svg class="i"><use href="#ghost"/></svg></span>
      <span class="st"><svg class="i"><use href="#ghost"/></svg></span>
      <i class="hsep s-c"></i>
      <span class="st drop"><svg class="i"><use href="#sketchtool"/></svg></span>
      <i class="hsep s-d"></i>
      <span class="st drop"><svg class="i"><use href="#cursor"/></svg></span>
      <i class="hsep s-e"></i>
      <span class="st drop"><svg class="i"><use href="#assy"/></svg></span>
      <i class="hline s-f"></i>
      <span class="st"><svg class="i"><use href="#mirror"/></svg></span>
      <span class="st drop"><svg class="i"><use href="#pattern"/></svg></span>
      <i class="hline s-g"></i>
      <span class="st drop"><svg class="i"><use href="#target"/></svg></span>
      <i class="hsep s-h"></i>
      <span class="st"><svg class="i"><use href="#dim1"/></svg></span>
      <span class="st"><svg class="i"><use href="#dim2"/></svg></span>
      <i class="hsep s-i"></i>
      <span class="st"><svg class="i"><use href="#snap1"/></svg></span>
      <span class="st"><svg class="i"><use href="#snap2"/></svg></span>
      <span class="st"><svg class="i"><use href="#snap3"/></svg></span>
    </aside>
  </main>

  <div class="toolbar bottom">
    <i class="sep first"></i>
    <span class="t"><svg class="i"><use href="#new"/></svg></span>
    <span class="t"><svg class="i"><use href="#open"/></svg></span>
    <span class="t"><svg class="i"><use href="#save"/></svg></span>
    <span class="t"><svg class="i"><use href="#print"/></svg></span>
    <span class="t"><svg class="i"><use href="#cut"/></svg></span>
    <span class="t"><svg class="i"><use href="#copy"/></svg></span>
    <span class="t"><svg class="i"><use href="#paste"/></svg></span>
    <span class="t drop"><svg class="i"><use href="#undo"/></svg></span>
    <span class="t drop"><svg class="i"><use href="#redo"/></svg></span>
    <span class="t"><svg class="i"><use href="#help"/></svg></span>
    <span class="t"><svg class="i"><use href="#search"/></svg></span>
    <i class="sep"></i>
    <span class="t tight"><svg class="i"><use href="#fx"/></svg></span>
    <span class="t tight"><svg class="i"><use href="#chat"/></svg></span>
    <span class="t tight"><svg class="i"><use href="#link"/></svg></span>
    <span class="t tight drop"><svg class="i"><use href="#table"/></svg></span>
    <span class="t tight"><svg class="i"><use href="#treeic"/></svg></span>
    <span class="t tight drop"><svg class="i"><use href="#lock"/></svg></span>
    <span class="t tight"><svg class="i"><use href="#params"/></svg></span>
    <i class="sep"></i>
    <span class="t"><svg class="i"><use href="#update"/></svg></span>
    <i class="sep"></i>
    <span class="t"><svg class="i"><use href="#measure"/></svg></span>
    <span class="t"><svg class="i"><use href="#inertia"/></svg></span>
    <span class="t"><svg class="i"><use href="#mass"/></svg></span>
    <i class="sep"></i>
    <span class="t"><svg class="i"><use href="#camera"/></svg></span>
    <i class="sep"></i>
    <span class="t"><svg class="i"><use href="#spin"/></svg></span>
    <span class="t"><svg class="i"><use href="#hand"/></svg></span>
    <span class="t"><svg class="i"><use href="#axes"/></svg></span>
    <span class="t"><svg class="i"><use href="#num"/></svg></span>
    <span class="t drop"><svg class="i"><use href="#box"/></svg></span>
    <span class="t"><svg class="i"><use href="#tol"/></svg></span>
    <span class="t drop"><svg class="i"><use href="#stack"/></svg></span>
    <span class="t"><svg class="i"><use href="#layers"/></svg></span>
    <div class="combo"><span>El_Ref</span><svg class="chev" viewBox="0 0 10 6"><path d="M1 1l4 4 4-4" fill="none" stroke="#555"/></svg></div>
    <i class="sep"></i>
    <span class="t"><svg class="i"><use href="#boxaxis"/></svg></span>
    <span class="t"><svg class="i"><use href="#gsd"/></svg></span>
    <span class="t"><svg class="i"><use href="#photo"/></svg></span>
    <span class="t"><svg class="i"><use href="#books"/></svg></span>
    <i class="sep"></i>
    <span class="more">»</span>
    <svg class="catia" viewBox="0 0 44 36">
      <text x="10" y="12" class="mark-3">3</text>
      <text x="1" y="25" class="mark-d">D</text>
      <text x="14" y="24" class="mark-s">S</text>
      <text x="8" y="33" class="mark-c">CATIA</text>
    </svg>
  </div>

  <footer class="statusbar">
    <span class="status-text">Sketch.3/Schite/Surub selected</span>
    <input class="status-input" type="text" aria-label="Command">
    <span class="status-btn"><svg viewBox="0 0 20 18"><path d="M5 4h8v8H5zM3 15h14V7" fill="none" stroke="#a3a4b8" stroke-width="1.500"/></svg></span>
    <span class="status-btn"><svg viewBox="0 0 20 18"><circle cx="9" cy="8" r="4.500" fill="none" stroke="#a3a4b8" stroke-width="1.500"/><path d="M3 15h14V7" fill="none" stroke="#a3a4b8" stroke-width="1.500"/></svg></span>
  </footer>
</div>
</body>
</html>
```

FILE: styles.css
```css
* { box-sizing: border-box; }
html, body { margin: 0; padding: 0; background: #fff; overflow: hidden; }
body { width: 1374px; height: 771px; font-family: "Open Sans", "Noto Sans", sans-serif; }
.defs { display: block; width: 0; height: 0; }
.app { width: 1366px; height: 768px; display: flex; flex-direction: column; background: #d0d1e8; }

.titlebar { height: 23px; flex: none; display: flex; align-items: center; background: #107c10; color: #fff; font-size: 11.6px; }
.title-logo { width: 16px; height: 16px; margin: 0 5px 0 2px; }
.title-text { line-height: 23px; }
.win-controls { margin: 0 2px 0 auto; display: flex; }
.win-btn { width: 46px; height: 23px; }

.menubar { height: 19px; flex: none; display: flex; align-items: center; background: #d0d1e8; font-size: 11.7px; color: #111; }
.menu-start { flex: none; width: 76px; height: 19px; display: flex; align-items: center; gap: 8px; background: linear-gradient(90deg, #fde1b8 69px, #d0d1e8 69px); }
.menu-logo { width: 20px; height: 19px; }
.menu { flex: none; line-height: 19px; }
.enovia { width: 100px; }
.file { width: 42px; }
.edit { width: 44px; }
.view { width: 49px; }
.insert { width: 53px; }
.tools { width: 52px; }
.window { width: 68px; }
.doc-controls { margin-left: auto; display: flex; gap: 1px; }
.doc-btn { width: 19px; height: 18px; background: #eeeef6; }

.toolbar { flex: none; display: flex; align-items: center; }
.toolbar.top { height: 39px; padding-left: 585px; background: linear-gradient(#fff 0, #d2d3e8 9px, #cfd0e6 25px, #a5a6ba 36px, #a5a6ba 37px, #55565f 37px, #55565f 39px); }
.toolbar.bottom { height: 37px; background: linear-gradient(#fff 0, #d6d7ea 6px, #cfd0e6 22px, #a6a7bb 35px, #55565f 36px, #55565f 37px); }
.sep { flex: none; width: 2px; height: 18px; margin: -4px 7px 0 9px; background: #fff; box-shadow: 1px 0 0 #9d9eb4; }
.top .sep:first-child { margin-left: 0; }
.sep.wide { margin-left: 113px; }
.sep.near { margin-left: 12px; }
.sep.first { margin-left: 5px; margin-right: 6px; }
.t { flex: none; position: relative; width: 28.6px; height: 28px; display: flex; align-items: center; justify-content: center; }
.top .t { margin-top: -1px; }
.bottom .t { width: 28.4px; margin-top: 1px; }
.bottom .t.tight { width: 27.8px; }
.i { width: 24px; height: 24px; display: block; }
.drop::after { content: ""; position: absolute; right: -3px; bottom: 0; border: 4px solid transparent; border-top: 5px solid #111; border-bottom: 0; }

.workspace { flex: 1; min-height: 0; display: flex; }
.viewport { position: relative; flex: 1; overflow: hidden; background: #353366; display: flex; }
.canvas { position: absolute; inset: 0; width: 1328px; height: 626px; }
.cz { font: 700 9px "Liberation Sans", sans-serif; fill: #f5e9a0; stroke: none; }
.ax { font: 10px "Liberation Sans", sans-serif; fill: #fff; stroke: none; }

.scrollbar { position: relative; flex: none; width: 15px; height: 100%; margin-left: 2px; display: flex; flex-direction: column; background: #5e5bd0; }
.arrow { width: 15px; height: 14px; flex: none; background: #7d78f5; display: block; }
.thumb { height: 348px; flex: none; background: #7d78f5; border-top: 1px solid #c4c2ff; }
.track { flex: 1; background: repeating-conic-gradient(#6f6ce6 0 25%, #3f3d98 0 50%) 0 0 / 2px 2px; }

.tree { position: relative; list-style: none; margin: 0; padding: 0; font-family: "Noto Sans", sans-serif; font-size: 10.5px; letter-spacing: .28px; color: #fff; }
.row { height: 24.45px; display: flex; align-items: center; white-space: nowrap; }
.lv0 { padding-left: 2px; }
.lv1 { padding-left: 1px; }
.lv2 { padding-left: 18.4px; }
.lv3 { padding-left: 35.8px; }
.lv4 { padding-left: 53.2px; }
.lv0 .x { width: 0; margin: 0; }
.lv0 .ti { margin-right: 4px; }
.x { position: relative; flex: none; width: 14px; height: 14px; margin: -6px 4px 0 0; border-radius: 50%; }
.x.plus, .x.minus { background: radial-gradient(circle at 50% 35%, #b8b8c2, #55556a); }
.x.plus { background: radial-gradient(circle at 50% 35%, #8c8c98, #33333f); }
.x.plus::before, .x.minus::before { content: ""; position: absolute; left: 2px; right: 2px; top: 6px; height: 2.5px; background: #0c0c14; }
.x.plus::after { content: ""; position: absolute; top: 2px; bottom: 2px; left: 6px; width: 2.5px; background: #0c0c14; }
.ti { flex: none; width: 20px; height: 20px; margin: -4px 3px 0 0; }
.lb { line-height: 15px; }
.sel { padding: 0 1px; background: #1a55c4; border-left: 1px solid #fff; border-top: 1px solid #fff; margin-left: -1px; }
.hot { padding: 0 1px; background: #f18612; margin-left: -1px; }
.und { border-bottom: 1px solid #fff; line-height: 13px; }

.sidebar { flex: none; width: 38px; display: flex; flex-direction: column; align-items: center; background: linear-gradient(90deg, #e8e8f6, #d8d9ec 30%, #cfd0e6 65%, #a7a8bc); }
.st { position: relative; flex: none; width: 32px; height: 28px; display: flex; align-items: center; justify-content: center; }
.st.drop::after { right: 0; bottom: 1px; }
.hsep { flex: none; width: 17px; height: 2px; background: #fff; box-shadow: 0 1px 0 #9d9eb4; }
.hline { flex: none; width: 100%; height: 1px; background: #55565f; box-shadow: 0 1px 0 #fff; }
.s-a { margin: 5px 0 4px; }
.s-b { margin: 13px 0 7px; }
.s-c { margin: 33px 0 8px; }
.s-d { margin: 10px 0 10px; }
.s-e { margin: 7px 0 8px; }
.s-f { margin: 3px 0 3px; }
.s-g { margin: 4px 0 5px; }
.s-h { margin: 10px 0 8px; }
.s-i { margin: 8px 0 6px; }

.combo { flex: none; width: 163px; height: 22px; margin: 2px 0 0 4px; display: flex; align-items: center; justify-content: space-between; padding: 0 7px 0 4px; background: #dedede; border: 1px solid #c4c4d0; font-size: 12px; color: #111; }
.chev { width: 10px; height: 6px; }
.more { flex: none; width: 14px; color: #9c9db5; font-size: 14px; text-align: center; margin-top: -8px; }
.catia { flex: none; width: 44px; height: 36px; margin-left: 10px; }
.mark-3 { font: italic 700 14px "Liberation Serif", serif; fill: #d8322a; }
.mark-d { font: italic 700 18px "Liberation Serif", serif; fill: #3a2f9c; }
.mark-s { font: italic 700 17px "Liberation Serif", serif; fill: #ef9a20; }
.mark-c { font: italic 700 9.5px "Liberation Sans", sans-serif; fill: #1d2a80; }
.num { font: 700 8.5px "Liberation Sans", sans-serif; fill: #222; }

.statusbar { height: 24px; flex: none; display: flex; align-items: flex-start; background: #d0d1e8; border-bottom: 2px solid #2c2c30; font-size: 11.2px; color: #111; }
.status-text { margin-left: 3px; line-height: 24px; }
.status-input { margin: 2px 0 0 auto; width: 300px; height: 19px; padding: 0; border: 1px solid #b8b9cc; background: #fff; }
.status-btn { margin: 2px 0 0 2px; width: 31px; height: 19px; display: flex; align-items: center; justify-content: center; background: #d6d7ea; border: 1px solid #b8b9cc; }
.status-btn:last-child { margin-right: 1px; }
.status-btn svg { width: 20px; height: 18px; }
```
